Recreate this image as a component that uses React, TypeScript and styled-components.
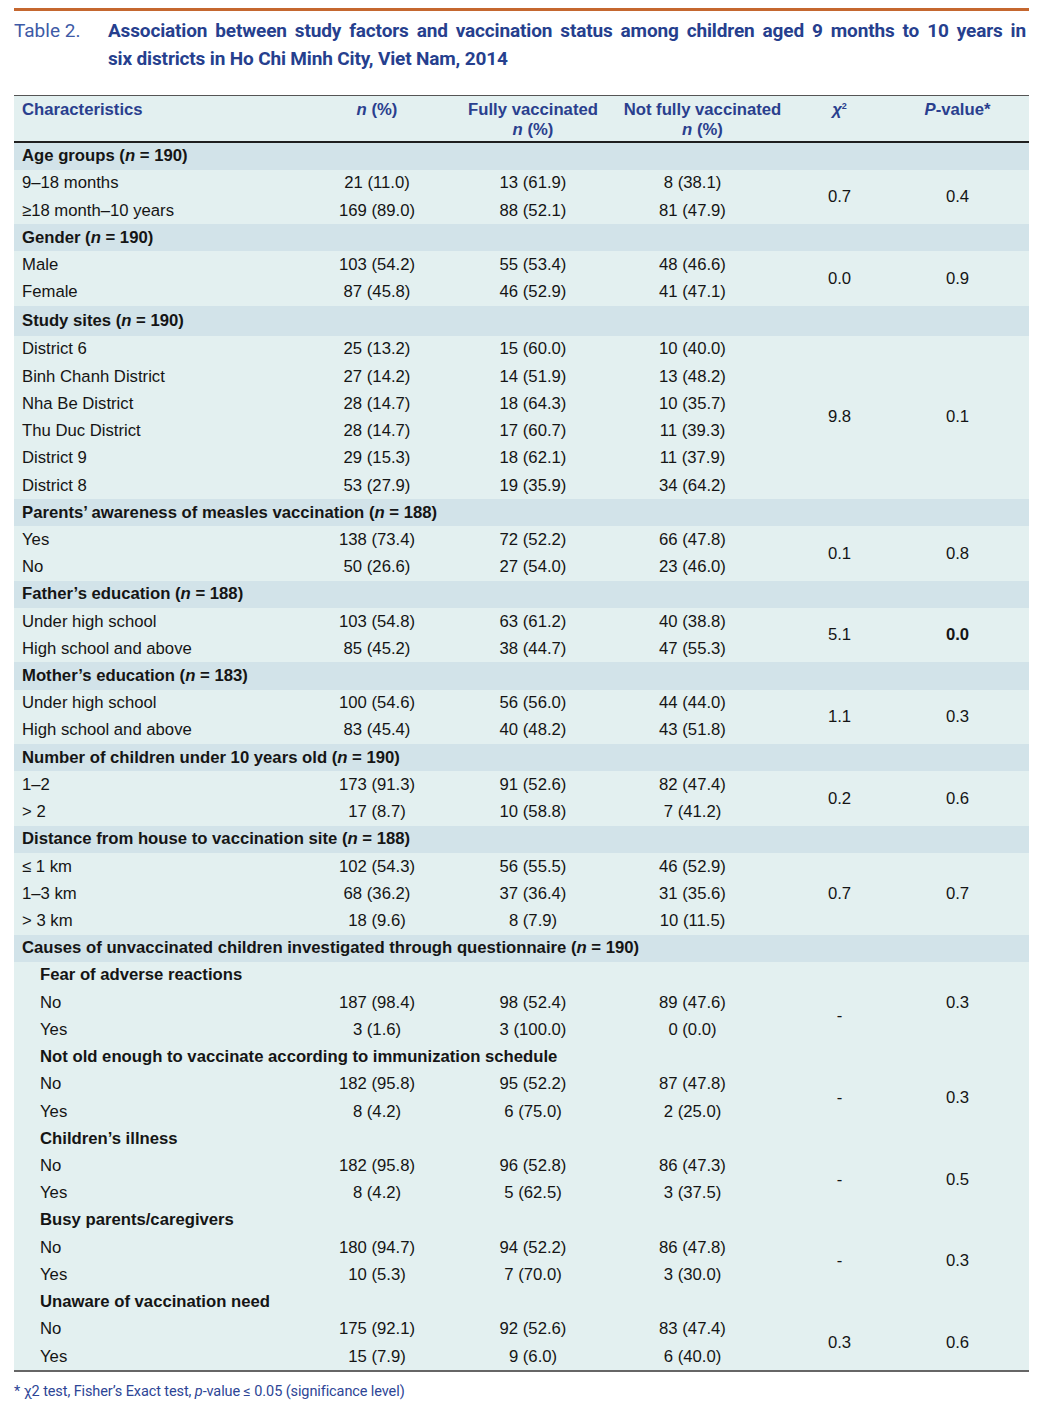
import React from "react";
import styled, { createGlobalStyle } from "styled-components";

const Global = createGlobalStyle`
  html, body { margin: 0; padding: 0; background: #ffffff; }
  body { font-family: "Liberation Sans", Arial, sans-serif; }
`;

const Page = styled.div`
  width: 1041px;
  padding: 8px 12px 0 14px;
  box-sizing: border-box;
`;

const Rule = styled.div`
  height: 3px;
  background: #c5672f;
`;

const TitleRow = styled.div`
  display: flex;
  margin-top: 6px;
  font-family: "Roboto", "Liberation Sans", sans-serif;
  font-size: 19px;
  line-height: 28px;
`;

const TableNo = styled.div`
  width: 94px;
  flex: none;
  color: #3d5aa6;
  font-weight: 400;
`;

const TitleText = styled.div`
  flex: 1;
  color: #263f8e;
  font-weight: 700;
  letter-spacing: -0.15px;
  padding-right: 3px;
`;

const TitleLine = styled.span<{ $justify?: boolean }>`
  display: block;
  text-align: ${(p) => (p.$justify ? "justify" : "left")};
  text-align-last: ${(p) => (p.$justify ? "justify" : "left")};
`;

const Table = styled.table`
  margin-top: 22px;
  width: 1015px;
  border-collapse: collapse;
  table-layout: fixed;
  font-family: "Liberation Sans", Arial, sans-serif;
  font-size: 16.7px;
  color: #151515;
`;

const HeadRow = styled.tr`
  background: #e3f0f0;
  border-top: 1.5px solid #555555;
  border-bottom: 2px solid #1f1f1f;
`;

const Th = styled.th<{ $align?: "left" | "center" }>`
  text-align: ${(p) => p.$align ?? "center"};
  vertical-align: top;
  font-weight: 700;
  color: #2a3f8e;
  line-height: 20px;
  padding: ${(p) => (p.$align === "left" ? "4px 0 0 8px" : "4px 3px 0")};
  height: 46px;
  box-sizing: border-box;
`;

const Sup = styled.sup`
  font-size: 9px;
  line-height: 0;
  vertical-align: 6px;
`;

const SectionRow = styled.tr`
  background: #d2e3e9;
`;

const DataRow = styled.tr`
  background: #e3f0f0;
`;

const Td = styled.td<{
  $align?: "left" | "center";
  $indent?: number;
  $bold?: boolean;
  $shift?: number;
  $tall?: boolean;
}>`
  height: ${(p) => (p.$tall ? "30px" : "27.22px")};
  padding: 0 ${(p) => p.$shift ?? 0}px 0 ${(p) => p.$indent ?? 0}px;
  text-align: ${(p) => p.$align ?? "center"};
  vertical-align: middle;
  font-weight: ${(p) => (p.$bold ? 700 : 400)};
  white-space: nowrap;
  line-height: 20px;
`;

const LastBody = styled.tbody`
  border-bottom: 2px solid #666666;
`;

const Footnote = styled.div`
  margin-top: 11px;
  font-family: "Roboto", "Liberation Sans", sans-serif;
  font-size: 14.5px;
  letter-spacing: -0.1px;
  color: #2d4596;
`;

type Row = [React.ReactNode, string, string, string];

type Group = {
  title: React.ReactNode;
  rows: Row[];
  chi: string;
  p: string;
  pBold?: boolean;
  tall?: boolean;
};

type SubGroup = Group & { pFromHeading?: boolean };

const N = () => <i>n</i>;

const groups: Group[] = [
  {
    title: <>Age groups (<N /> = 190)</>,
    rows: [
      ["9–18 months", "21 (11.0)", "13 (61.9)", "8 (38.1)"],
      ["≥18 month–10 years", "169 (89.0)", "88 (52.1)", "81 (47.9)"],
    ],
    chi: "0.7",
    p: "0.4",
  },
  {
    title: <>Gender (<N /> = 190)</>,
    rows: [
      ["Male", "103 (54.2)", "55 (53.4)", "48 (46.6)"],
      ["Female", "87 (45.8)", "46 (52.9)", "41 (47.1)"],
    ],
    chi: "0.0",
    p: "0.9",
  },
  {
    title: <>Study sites (<N /> = 190)</>,
    rows: [
      ["District 6", "25 (13.2)", "15 (60.0)", "10 (40.0)"],
      ["Binh Chanh District", "27 (14.2)", "14 (51.9)", "13 (48.2)"],
      ["Nha Be District", "28 (14.7)", "18 (64.3)", "10 (35.7)"],
      ["Thu Duc District", "28 (14.7)", "17 (60.7)", "11 (39.3)"],
      ["District 9", "29 (15.3)", "18 (62.1)", "11 (37.9)"],
      ["District 8", "53 (27.9)", "19 (35.9)", "34 (64.2)"],
    ],
    chi: "9.8",
    p: "0.1",
    tall: true,
  },
  {
    title: <>Parents’ awareness of measles vaccination (<N /> = 188)</>,
    rows: [
      ["Yes", "138 (73.4)", "72 (52.2)", "66 (47.8)"],
      ["No", "50 (26.6)", "27 (54.0)", "23 (46.0)"],
    ],
    chi: "0.1",
    p: "0.8",
  },
  {
    title: <>Father’s education (<N /> = 188)</>,
    rows: [
      ["Under high school", "103 (54.8)", "63 (61.2)", "40 (38.8)"],
      ["High school and above", "85 (45.2)", "38 (44.7)", "47 (55.3)"],
    ],
    chi: "5.1",
    p: "0.0",
    pBold: true,
  },
  {
    title: <>Mother’s education (<N /> = 183)</>,
    rows: [
      ["Under high school", "100 (54.6)", "56 (56.0)", "44 (44.0)"],
      ["High school and above", "83 (45.4)", "40 (48.2)", "43 (51.8)"],
    ],
    chi: "1.1",
    p: "0.3",
  },
  {
    title: <>Number of children under 10 years old (<N /> = 190)</>,
    rows: [
      ["1–2", "173 (91.3)", "91 (52.6)", "82 (47.4)"],
      ["> 2", "17 (8.7)", "10 (58.8)", "7 (41.2)"],
    ],
    chi: "0.2",
    p: "0.6",
  },
  {
    title: <>Distance from house to vaccination site (<N /> = 188)</>,
    rows: [
      ["≤ 1 km", "102 (54.3)", "56 (55.5)", "46 (52.9)"],
      ["1–3 km", "68 (36.2)", "37 (36.4)", "31 (35.6)"],
      ["> 3 km", "18 (9.6)", "8 (7.9)", "10 (11.5)"],
    ],
    chi: "0.7",
    p: "0.7",
  },
];

const causes: SubGroup[] = [
  {
    title: "Fear of adverse reactions",
    rows: [
      ["No", "187 (98.4)", "98 (52.4)", "89 (47.6)"],
      ["Yes", "3 (1.6)", "3 (100.0)", "0 (0.0)"],
    ],
    chi: "-",
    p: "0.3",
    pFromHeading: true,
  },
  {
    title: "Not old enough to vaccinate according to immunization schedule",
    rows: [
      ["No", "182 (95.8)", "95 (52.2)", "87 (47.8)"],
      ["Yes", "8 (4.2)", "6 (75.0)", "2 (25.0)"],
    ],
    chi: "-",
    p: "0.3",
  },
  {
    title: "Children’s illness",
    rows: [
      ["No", "182 (95.8)", "96 (52.8)", "86 (47.3)"],
      ["Yes", "8 (4.2)", "5 (62.5)", "3 (37.5)"],
    ],
    chi: "-",
    p: "0.5",
  },
  {
    title: "Busy parents/caregivers",
    rows: [
      ["No", "180 (94.7)", "94 (52.2)", "86 (47.8)"],
      ["Yes", "10 (5.3)", "7 (70.0)", "3 (30.0)"],
    ],
    chi: "-",
    p: "0.3",
  },
  {
    title: "Unaware of vaccination need",
    rows: [
      ["No", "175 (92.1)", "92 (52.6)", "83 (47.4)"],
      ["Yes", "15 (7.9)", "9 (6.0)", "6 (40.0)"],
    ],
    chi: "0.3",
    p: "0.6",
  },
];

const Cells: React.FC<{ row: Row; indent: number }> = ({ row, indent }) => (
  <>
    <Td $align="left" $indent={indent}>{row[0]}</Td>
    <Td>{row[1]}</Td>
    <Td>{row[2]}</Td>
    <Td $shift={20}>{row[3]}</Td>
  </>
);

const GroupRows: React.FC<{ g: Group }> = ({ g }) => (
  <tbody>
    <SectionRow>
      <Td $align="left" $indent={8} $bold $tall={g.tall} colSpan={6}>
        {g.title}
      </Td>
    </SectionRow>
    {g.rows.map((r, i) => (
      <DataRow key={i}>
        <Cells row={r} indent={8} />
        {i === 0 && (
          <>
            <Td rowSpan={g.rows.length}>{g.chi}</Td>
            <Td rowSpan={g.rows.length} $bold={g.pBold}>{g.p}</Td>
          </>
        )}
      </DataRow>
    ))}
  </tbody>
);

const SubRows: React.FC<{ g: SubGroup }> = ({ g }) => (
  <>
    <DataRow>
      <Td $align="left" $indent={26} $bold colSpan={4}>{g.title}</Td>
      <Td />
      {g.pFromHeading ? <Td rowSpan={3}>{g.p}</Td> : <Td />}
    </DataRow>
    {g.rows.map((r, i) => (
      <DataRow key={i}>
        <Cells row={r} indent={26} />
        {i === 0 && (
          <>
            <Td rowSpan={2}>{g.chi}</Td>
            {!g.pFromHeading && <Td rowSpan={2}>{g.p}</Td>}
          </>
        )}
      </DataRow>
    ))}
  </>
);

export default function App() {
  return (
    <Page>
      <Global />
      <Rule />
      <TitleRow>
        <TableNo>Table 2.</TableNo>
        <TitleText>
          <TitleLine $justify>
            Association between study factors and vaccination status among children aged 9 months to 10 years in
          </TitleLine>
          <TitleLine>six districts in Ho Chi Minh City, Viet Nam, 2014</TitleLine>
        </TitleText>
      </TitleRow>
      <Table>
        <colgroup>
          <col style={{ width: 286 }} />
          <col style={{ width: 154 }} />
          <col style={{ width: 158 }} />
          <col style={{ width: 181 }} />
          <col style={{ width: 93 }} />
          <col style={{ width: 143 }} />
        </colgroup>
        <thead>
          <HeadRow>
            <Th $align="left">Characteristics</Th>
            <Th>
              <i>n</i> (%)
            </Th>
            <Th>
              Fully vaccinated
              <br />
              <i>n</i> (%)
            </Th>
            <Th>
              Not fully vaccinated
              <br />
              <i>n</i> (%)
            </Th>
            <Th>
              <i>χ</i>
              <Sup>2</Sup>
            </Th>
            <Th>
              <i>P</i>-value*
            </Th>
          </HeadRow>
        </thead>
        {groups.map((g, i) => (
          <GroupRows key={i} g={g} />
        ))}
        <LastBody>
          <SectionRow>
            <Td $align="left" $indent={8} $bold colSpan={6}>
              Causes of unvaccinated children investigated through questionnaire (<N /> = 190)
            </Td>
          </SectionRow>
          {causes.map((g, i) => (
            <SubRows key={i} g={g} />
          ))}
        </LastBody>
      </Table>
      <Footnote>
        * χ2 test, Fisher’s Exact test, <i>p</i>-value ≤ 0.05 (significance level)
      </Footnote>
    </Page>
  );
}
